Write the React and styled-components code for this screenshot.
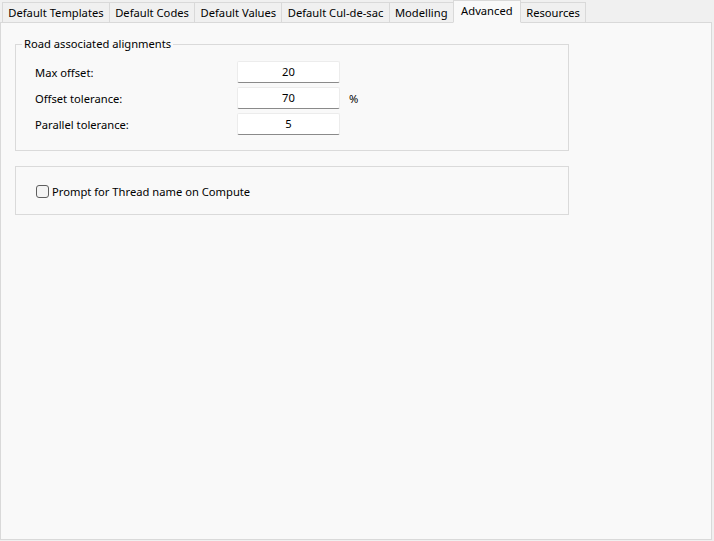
import React, { useState } from 'react';
import styled, { createGlobalStyle } from 'styled-components';

const Global = createGlobalStyle`
  html, body {
    margin: 0;
    padding: 0;
    background: #f0f0f0;
    font-family: "Segoe UI", "Noto Sans", sans-serif;
    font-size: 11.2px;
    color: #000;
  }
`;

const tabs = [
  'Default Templates',
  'Default Codes',
  'Default Values',
  'Default Cul-de-sac',
  'Modelling',
  'Advanced',
  'Resources',
];

const fields = [
  { label: 'Max offset:', value: '20' },
  { label: 'Offset tolerance:', value: '70', unit: '%' },
  { label: 'Parallel tolerance:', value: '5' },
];

export default function App() {
  const [active, setActive] = useState('Advanced');
  const [prompt, setPrompt] = useState(false);

  return (
    <>
      <Global />
      <Window>
        <TabBar>
          {tabs.map(t => (
            <Tab key={t} $active={t === active} onClick={() => setActive(t)}>
              {t}
            </Tab>
          ))}
        </TabBar>
        <Panel>
          <GroupBox>
            <Legend>Road associated alignments</Legend>
            <FieldList>
              {fields.map(f => (
                <FieldRow key={f.label}>
                  <Label>{f.label}</Label>
                  <Input defaultValue={f.value} />
                  {f.unit && <Unit>{f.unit}</Unit>}
                </FieldRow>
              ))}
            </FieldList>
          </GroupBox>
          <PlainBox>
            <CheckLabel>
              <Check type="checkbox" checked={prompt} onChange={e => setPrompt(e.target.checked)} />
              Prompt for Thread name on Compute
            </CheckLabel>
          </PlainBox>
        </Panel>
      </Window>
    </>
  );
}

const Window = styled.div`
  width: 714px;
  height: 541px;
  display: flex;
  flex-direction: column;
  box-sizing: border-box;
  padding: 0 2px 1px 0;
`;

const TabBar = styled.div`
  display: flex;
  align-items: flex-end;
  height: 23px;
  padding-left: 3px;
  margin-bottom: -1px;
  position: relative;
  z-index: 1;
`;

const Tab = styled.div`
  box-sizing: border-box;
  height: ${p => (p.$active ? '23px' : '21px')};
  padding: 0 ${p => (p.$active ? '7.3px' : '5.3px')};
  display: flex;
  align-items: center;
  padding-bottom: ${p => (p.$active ? '3px' : '0')};
  background: ${p => (p.$active ? '#f9f9f9' : '#f0f0f0')};
  border: 1px solid #d9d9d9;
  border-bottom: ${p => (p.$active ? '1px solid #f9f9f9' : '1px solid #d9d9d9')};
  margin-left: -1px;
  white-space: nowrap;
  cursor: default;
  position: relative;
  z-index: ${p => (p.$active ? 2 : 1)};
`;

const Panel = styled.div`
  flex: 1;
  background: #f9f9f9;
  border: 1px solid #d9d9d9;
  padding: 14px 142px 0 14px;
  display: flex;
  flex-direction: column;
  gap: 15px;
`;

const GroupBox = styled.fieldset`
  margin: 0;
  border: 1px solid #dadada;
  padding: 10px 19px 14px 19px;
  height: 114px;
  box-sizing: border-box;
`;

const Legend = styled.legend`
  padding: 0 2px;
  margin-left: -13px;
  line-height: 14px;
`;

const FieldList = styled.div`
  display: flex;
  flex-direction: column;
  gap: 4px;
`;

const FieldRow = styled.div`
  display: flex;
  align-items: center;
  height: 22px;
`;

const Label = styled.span`
  width: 202px;
`;

const Input = styled.input`
  box-sizing: border-box;
  width: 103px;
  height: 22px;
  border: 1px solid #ececec;
  border-bottom: 1px solid #8a8a8a;
  border-radius: 2px;
  background: #fff;
  text-align: center;
  font: inherit;
  color: #000;
  padding: 0 4px 1px;
  outline: none;
`;

const Unit = styled.span`
  margin-left: 9px;
`;

const PlainBox = styled.div`
  border: 1px solid #dadada;
  height: 49px;
  box-sizing: border-box;
  display: flex;
  align-items: center;
  padding-left: 20px;
  padding-top: 1px;
`;

const CheckLabel = styled.label`
  display: flex;
  align-items: center;
  gap: 3px;
`;

const Check = styled.input`
  appearance: none;
  margin: 0;
  width: 13px;
  height: 13px;
  box-sizing: border-box;
  border: 1px solid #5f5f5f;
  border-radius: 3px;
  background: #f4f4f4;
  &:checked {
    background: #005fb8;
    border-color: #005fb8;
  }
`;
